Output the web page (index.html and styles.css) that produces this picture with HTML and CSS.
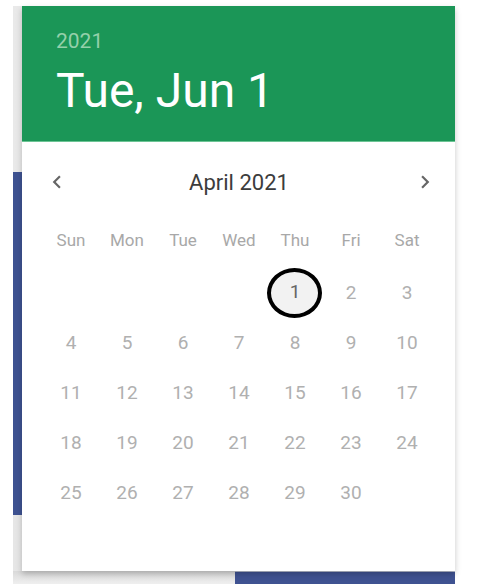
FILE: index.html
```html
<!DOCTYPE html>
<html>
<head>
<meta charset="utf-8">
<link rel="stylesheet" href="styles.css">
</head>
<body>
<div class="stage">
  <div class="backdrop">
    <div class="bd-top"></div>
    <div class="bd-blue"></div>
    <div class="bd-gray"></div>
    <div class="bd-foot">
      <div class="bd-foot-gray"></div>
      <div class="bd-foot-blue"></div>
    </div>
  </div>
  <div class="card">
    <div class="toolbar">
      <div class="year">2021</div>
      <div class="title">Tue, Jun 1</div>
    </div>
    <div class="body">
      <div class="nav">
        <span class="arrow"><svg viewBox="0 0 24 24" width="26" height="26"><path d="M15.41 7.41L14 6l-6 6 6 6 1.41-1.41L10.83 12z" fill="#666"/></svg></span>
        <span class="month">April 2021</span>
        <span class="arrow"><svg viewBox="0 0 24 24" width="26" height="26"><path d="M8.59 16.59L10 18l6-6-6-6-1.41 1.41L13.17 12z" fill="#666"/></svg></span>
      </div>
      <div class="weekdays">
        <span>Sun</span><span>Mon</span><span>Tue</span><span>Wed</span><span>Thu</span><span>Fri</span><span>Sat</span>
      </div>
      <div class="days">
        <span></span><span></span><span></span><span></span>
        <span class="sel"><i class="ring"></i><b>1</b></span><span>2</span><span>3</span>
        <span>4</span><span>5</span><span>6</span><span>7</span><span>8</span><span>9</span><span>10</span>
        <span>11</span><span>12</span><span>13</span><span>14</span><span>15</span><span>16</span><span>17</span>
        <span>18</span><span>19</span><span>20</span><span>21</span><span>22</span><span>23</span><span>24</span>
        <span>25</span><span>26</span><span>27</span><span>28</span><span>29</span><span>30</span>
      </div>
    </div>
  </div>
</div>
</body>
</html>
```
FILE: styles.css
```css
html, body {
  margin: 0;
  padding: 0;
  background: #fff;
}
body {
  font-family: Roboto, "Liberation Sans", sans-serif;
  width: 478px;
  height: 584px;
  overflow: hidden;
}
.stage {
  position: relative;
  margin: 6px 0 0 13px;
  width: 442px;
  height: 578px;
}
.backdrop {
  display: flex;
  flex-direction: column;
  height: 100%;
}
.bd-top {
  height: 166px;
  background: linear-gradient(90deg, #e9e9e9, #f1f1f1);
}
.bd-blue {
  height: 343px;
  background: #3e5291;
}
.bd-gray {
  height: 56px;
  background: linear-gradient(90deg, #e6e6e6, #eeeeee);
}
.bd-foot {
  height: 13px;
  display: flex;
}
.bd-foot-gray {
  width: 222px;
  background: linear-gradient(180deg, #d9d9d9, #efefef);
}
.bd-foot-blue {
  flex: 1;
  background: #3f5291;
  border-top: 1px solid #b9bfd0;
}
.card {
  position: absolute;
  top: 0;
  left: 9px;
  width: 433px;
  height: 565px;
  background: #fff;
  box-shadow: 0 3px 6px rgba(0,0,0,0.22);
  display: flex;
  flex-direction: column;
}
.toolbar {
  height: 136px;
  box-sizing: border-box;
  background: #1b9657;
  padding: 23px 0 0 34px;
  border-bottom: 1px solid #6cc494;
}
.year {
  font-size: 21px;
  line-height: 24px;
  color: #94d0aa;
}
.title {
  margin-top: 10px;
  font-size: 48px;
  line-height: 56px;
  color: #fff;
}
.body {
  padding-top: 20px;
}
.nav {
  height: 40px;
  display: flex;
  align-items: center;
  justify-content: space-between;
  padding: 0 17px 0 22px;
}
.arrow {
  width: 26px;
  height: 26px;
  display: flex;
}
.month {
  font-size: 22px;
  color: #3c3c3c;
  margin-left: -4px;
}
.weekdays, .days {
  display: grid;
  grid-template-columns: repeat(7, 56px);
  margin-left: 21px;
}
.weekdays {
  margin-top: 20px;
  height: 36px;
  align-items: center;
}
.weekdays span {
  text-align: center;
  font-size: 17px;
  line-height: 36px;
  color: #a8a8a8;
}
.days {
  margin-top: 9px;
  grid-auto-rows: 50px;
}
.days span {
  display: flex;
  align-items: center;
  justify-content: center;
  font-size: 19px;
  color: #b0b0b0;
  position: relative;
}
.days .sel b {
  font-weight: 400;
  color: #666;
  position: relative;
  top: -1px;
}
.ring {
  position: absolute;
  left: 0;
  top: 1px;
  width: 55px;
  height: 50px;
  box-sizing: border-box;
  border: 4px solid #000;
  border-radius: 50%;
  background: #f2f2f2;
}
```
